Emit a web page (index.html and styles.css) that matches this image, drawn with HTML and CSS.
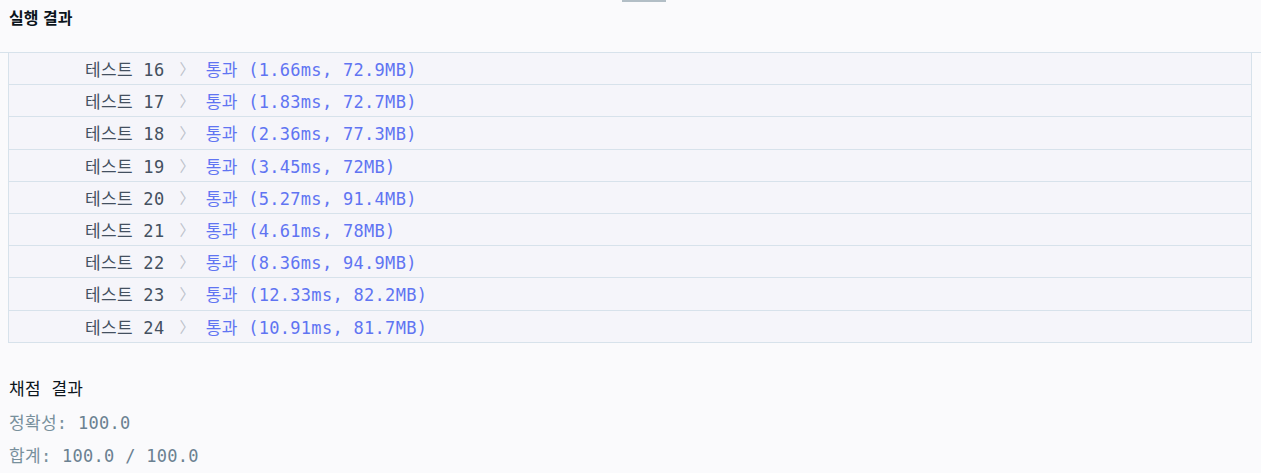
FILE: index.html
```html
<!DOCTYPE html>
<html lang="ko">
  <head>
    <meta charset="UTF-8" />
    <title>실행 결과</title>
    <link rel="stylesheet" href="styles.css">
  </head>
  <body>
    <div class="handle"></div>

    <div class="result-header">
      <h4>실행 결과</h4>
    </div>

    <div class="console">
      <div class="test-row"><span class="label">테스트 16</span><span class="arrow">〉</span><span class="pass">통과 (1.66ms, 72.9MB)</span></div>
      <div class="test-row"><span class="label">테스트 17</span><span class="arrow">〉</span><span class="pass">통과 (1.83ms, 72.7MB)</span></div>
      <div class="test-row"><span class="label">테스트 18</span><span class="arrow">〉</span><span class="pass">통과 (2.36ms, 77.3MB)</span></div>
      <div class="test-row"><span class="label">테스트 19</span><span class="arrow">〉</span><span class="pass">통과 (3.45ms, 72MB)</span></div>
      <div class="test-row"><span class="label">테스트 20</span><span class="arrow">〉</span><span class="pass">통과 (5.27ms, 91.4MB)</span></div>
      <div class="test-row"><span class="label">테스트 21</span><span class="arrow">〉</span><span class="pass">통과 (4.61ms, 78MB)</span></div>
      <div class="test-row"><span class="label">테스트 22</span><span class="arrow">〉</span><span class="pass">통과 (8.36ms, 94.9MB)</span></div>
      <div class="test-row"><span class="label">테스트 23</span><span class="arrow">〉</span><span class="pass">통과 (12.33ms, 82.2MB)</span></div>
      <div class="test-row"><span class="label">테스트 24</span><span class="arrow">〉</span><span class="pass">통과 (10.91ms, 81.7MB)</span></div>
    </div>

    <div class="summary">
      <div class="summary-title">채점 결과</div>
      <div class="summary-line">정확성: <b>100.0</b></div>
      <div class="summary-line">합계: <b>100.0 / 100.0</b></div>
    </div>
  </body>
</html>
```

FILE: styles.css
```css
* {
  box-sizing: border-box;
}

body {
  margin: 0;
  padding: 0;
  background-color: #fafafc;
  font-family: "DejaVu Sans Mono", "Noto Sans CJK KR", monospace;
  font-size: 17px;
  letter-spacing: 0.3px;
  color: #263747;
}

/* resize handle at the top */
.handle {
  position: absolute;
  top: 0;
  left: 622px;
  width: 44px;
  height: 2px;
  background-color: #b2bec6;
}

.result-header {
  height: 53px;
  padding: 6px 9px 0;
  border-bottom: 1px solid #d7e2eb;

  h4 {
    margin: 0;
    font-family: "Noto Sans CJK KR", "Noto Sans", sans-serif;
    font-size: 16px;
    font-weight: bold;
    line-height: 22px;
    letter-spacing: 0;
    color: #0c151c;
  }
}

.console {
  margin: 0 9px 0 8px;
  border-left: 1px solid #d7e2eb;
  border-right: 1px solid #d7e2eb;
  background-color: #f5f5fa;
}

.test-row {
  display: flex;
  align-items: center;
  height: 32.2px;
  padding-left: 76px;
  border-bottom: 1px solid #d7e2eb;
  white-space: pre;
}

.label {
  color: #44505f;
}

.arrow {
  margin: 0 11px 0 15px;
  color: #bcc2ca;
  font-family: "Noto Sans CJK KR", sans-serif;
  font-size: 15px;
}

.pass {
  color: #6074f2;
}

.summary {
  padding: 35px 9px 0;
}

.summary-title {
  height: 34px;
  line-height: 22px;
  color: #0c151c;
}

.summary-line {
  height: 33px;
  line-height: 22px;
  color: #78909c;

  b {
    font-weight: normal;
    color: #6b8191;
  }
}
```
